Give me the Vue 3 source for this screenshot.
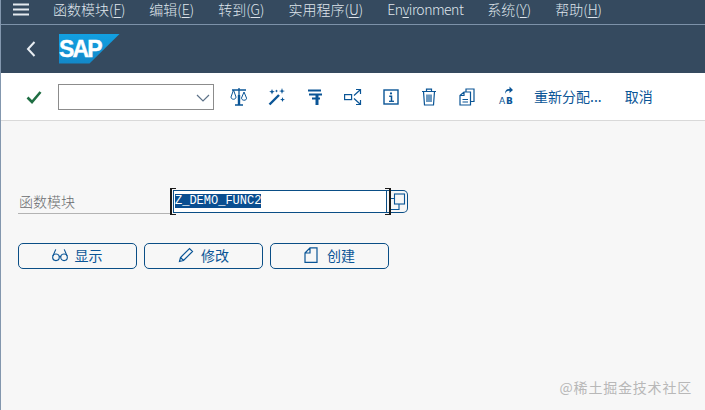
<template>
  <div class="window">
    <nav class="menubar">
      <svg class="burger" width="16" height="13" viewBox="0 0 16 13"><path d="M0 1.500h16M0 6.500h16M0 11.500h16" stroke="#e4e9ef" stroke-width="2" /></svg>
      <span v-for="m in menus" :key="m.label" class="menu">{{ m.label }}(<u>{{ m.key }}</u>)</span>
      <span class="menu env">En<u>v</u>ironment</span>
      <span v-for="m in menus2" :key="m.label" class="menu">{{ m.label }}(<u>{{ m.key }}</u>)</span>
    </nav>

    <header class="titlebar">
      <svg class="back" width="10" height="16" viewBox="0 0 10 16"><path d="M8.500 1 2 8l6.500 7" fill="none" stroke="#e8edf2" stroke-width="2" /></svg>
      <div class="logo"><span>SAP</span></div>
    </header>

    <div class="toolbar">
      <svg class="check" width="16" height="14" viewBox="0 0 16 14"><path d="M1.500 7.500 6 12 14.500 2" fill="none" stroke="#1f6e43" stroke-width="2.600" /></svg>
      <div class="combo">
        <svg width="14" height="8" viewBox="0 0 14 8"><path d="M1 1l6 6 6-6" fill="none" stroke="#5d7288" stroke-width="1.200" /></svg>
      </div>
      <div class="tools">
        <span class="tool">
          <svg width="18" height="20" viewBox="0 0 18 20" fill="none" stroke="#0a5596" stroke-width="1.300">
            <path d="M2 3h14M9 1v15M5 18h8" />
            <path d="M3.500 3 1 10c0 3 5 3 5 0L3.500 3M14 5l-2.500 6c0 3 5.500 3 5 0L14 5" stroke-width="1" />
            <path d="M9 8v10" stroke-width="2.400" />
          </svg>
        </span>
        <span class="tool">
          <svg width="18" height="18" viewBox="0 0 18 18" fill="#0a5596">
            <path d="M1.500 16.500 11 7" stroke="#0a5596" stroke-width="2.400" />
            <path d="m4 1 .8 2 2 .6-2 .8L4 6.500l-.8-2.100-2-.8 2-.6zM14 0l.8 2.400 2.200.6-2.200.8L14 6l-.8-2.200-2.200-.8 2.200-.6zM14.500 9l.7 1.900 1.800.6-1.800.7-.7 1.800-.7-1.800-1.800-.7 1.800-.6zM8.500 1.500l.5 1 1 .5-1 .5-.5 1-.5-1-1-.5 1-.5z" />
          </svg>
        </span>
        <span class="tool">
          <svg width="16" height="18" viewBox="0 0 16 18" fill="none" stroke="#0a5596">
            <path d="M1 2.500h13M2 6.500h13M5 10.500h8" stroke-width="1.800" />
            <path d="M10 6v11" stroke-width="3" />
          </svg>
        </span>
        <span class="tool">
          <svg width="18" height="18" viewBox="0 0 18 18" fill="none" stroke="#0a5596" stroke-width="1.200">
            <rect x="0.600" y="6.600" width="7" height="5" />
            <path d="M10 7.500 16 2M12 1.500h4.500V6M10 10.500l6 5.500M12 16.500h4.500V12" />
          </svg>
        </span>
        <span class="tool">
          <svg width="16" height="16" viewBox="0 0 16 16" fill="none" stroke="#0a5596">
            <rect x="1" y="1" width="14" height="14" stroke-width="1.400" />
            <path d="M6.200 7.200h2.300v4.800" stroke-width="1.500" />
            <path d="M6 12.300h5" stroke-width="1.300" />
            <circle cx="8" cy="4.400" r="1.100" fill="#0a5596" stroke="none" />
          </svg>
        </span>
        <span class="tool">
          <svg width="16" height="18" viewBox="0 0 16 18" fill="none" stroke="#0a5596" stroke-width="1.200">
            <path d="M1 3.500h14M5.500 3.500V1.200h5v2.300M2.500 3.500l1 13.500h9l1-13.500M6 6.500v7.500M8 6.500v7.500M10 6.500v7.500" />
          </svg>
        </span>
        <span class="tool">
          <svg width="16" height="18" viewBox="0 0 16 18" fill="none" stroke="#0a5596" stroke-width="1.200">
            <path d="M1 7.500 5 4h6.500v13H1zM5 4v3.500H1M3.500 11.500h5.500M3.500 14h5.500" />
            <path d="M7 4V1h8v12.500h-3.500" />
          </svg>
        </span>
        <span class="tool ab">
          <svg width="12" height="8" viewBox="0 0 12 8" fill="#0a5596">
            <path d="M3 8c0-4 2-5.500 4.500-5V0.500L11 4 7.500 7V4.800C5.500 4.500 4 5.500 3 8z" />
          </svg>
          <span class="ab-a">A</span><span class="ab-b">B</span>
        </span>
      </div>
      <span class="txt first">重新分配...</span>
      <span class="txt">取消</span>
    </div>

    <main class="content">
      <div class="field">
        <label class="label">函数模块</label>
        <div class="input-wrap">
          <div class="input"><span class="sel">Z_DEMO_FUNC2</span></div>
          <i class="br br-l"></i><i class="br br-r"></i>
          <div class="help">
            <svg width="18" height="18" viewBox="0 0 18 18" fill="none" stroke="#0a5596" stroke-width="1.100">
              <rect x="6.500" y="1" width="10" height="10" />
              <path d="M6.500 5.500H2v11h9V11" />
            </svg>
          </div>
        </div>
      </div>

      <div class="buttons">
        <button class="btn">
          <svg class="glasses" width="16" height="14" viewBox="0 0 17 14" fill="none" stroke="#0a5596" stroke-width="1.200">
            <circle cx="4.200" cy="9.500" r="3.500" /><circle cx="12.800" cy="9.500" r="3.500" />
            <path d="M7.700 9c.8-.7 1-.7 1.600 0M1 8l3-7M16 8 13 1" />
          </svg>
          显示
        </button>
        <button class="btn">
          <svg width="16" height="16" viewBox="0 0 16 16" fill="none" stroke="#0a5596" stroke-width="1.200">
            <path d="M1.500 14.500l1-4L11.500 1.500l3 3-9 9zM2.500 10.500l3 3" />
          </svg>
          修改
        </button>
        <button class="btn new">
          <svg width="14" height="16" viewBox="0 0 14 16" fill="none" stroke="#0a5596" stroke-width="1.200">
            <path d="M1 6 6 .8h7v14.600H1zM6 .8V6H1" />
          </svg>
          创建
        </button>
      </div>
    </main>

    <div class="watermark">@稀土掘金技术社区</div>
  </div>
</template>

<script setup>
const menus = [
  { label: '函数模块', key: 'F' },
  { label: '编辑', key: 'E' },
  { label: '转到', key: 'G' },
  { label: '实用程序', key: 'U' },
]
const menus2 = [
  { label: '系统', key: 'Y' },
  { label: '帮助', key: 'H' },
]
</script>

<style>
html, body { margin: 0; background: #f7f7f7; }
</style>

<style scoped>
.window {
  position: relative;
  width: 705px;
  height: 410px;
  overflow: hidden;
  box-sizing: border-box;
  border-left: 1px solid #8397ae;
  display: flex;
  flex-direction: column;
  background: #f7f7f7;
  font-family: "Noto Sans CJK SC", "Noto Sans", sans-serif;
  font-size: 14px;
}
.menubar {
  height: 24px;
  flex: none;
  box-sizing: border-box;
  display: flex;
  align-items: center;
  gap: 24px;
  padding: 0 0 6px 12px;
  background: #354a5f;
  color: #dfe5ec;
  font-weight: 300;
}
.menu { white-space: nowrap; line-height: 20px; }
.menu u { text-underline-offset: 2px; }
.env { letter-spacing: -.5px; }
.titlebar {
  height: 49px;
  flex: none;
  box-sizing: border-box;
  display: flex;
  align-items: center;
  padding-left: 25px;
  background: #354a5f;
  border-top: 1px solid #7d92a9;
}
.logo {
  margin-left: 23px;
  margin-top: -1px;
  width: 61px;
  height: 30px;
  background: linear-gradient(180deg, #12a0e2, #1388c8);
  clip-path: polygon(0 0, 100% 0, 50% 100%, 0 100%);
  color: #fff;
  font-family: "Liberation Sans", sans-serif;
  font-weight: 700;
  font-size: 23px;
  line-height: 30px;
  letter-spacing: -1.800px;
  -webkit-text-stroke: .4px #fff;
  box-sizing: border-box;
}
.toolbar {
  height: 48px;
  flex: none;
  box-sizing: border-box;
  display: flex;
  align-items: center;
  padding-left: 25px;
  background: #fff;
  border-bottom: 1px solid #d9d9d9;
}
.combo {
  width: 156px;
  height: 26px;
  margin-left: 16px;
  box-sizing: border-box;
  border: 1px solid #8c8c8c;
  display: flex;
  align-items: center;
  justify-content: flex-end;
  padding: 2px 3px 0 0;
}
.tools { display: flex; margin-left: 6px; }
.tool {
  position: relative;
  width: 38px;
  height: 24px;
  display: flex;
  align-items: center;
  justify-content: center;
}
.ab { color: #0a5596; font-family: "DejaVu Sans", sans-serif; font-size: 9px; }
.ab svg { position: relative; left: 3px; top: -7px; }
.ab-a, .ab-b { position: absolute; top: 11px; line-height: 10px; }
.ab-a { left: 13px; }
.ab-b { left: 20px; font-weight: 700; }
.txt { color: #0a5596; white-space: nowrap; margin-left: 23px; padding-bottom: 2px; }
.txt.first { margin-left: 10px; }
.content { flex: 1; padding: 68px 0 0 17px; }
.field { display: flex; align-items: flex-end; height: 26px; }
.label {
  width: 152px;
  box-sizing: border-box;
  height: 24px;
  line-height: 22px;
  padding-left: 1px;
  margin-bottom: 1px;
  color: #6a6d70;
  font-weight: 300;
  border-bottom: 1px solid #b3b3b3;
}
.input-wrap {
  position: relative;
  display: flex;
  margin-left: 3px;
  margin-bottom: 2px;
}
.input {
  width: 214px;
  height: 23px;
  box-sizing: border-box;
  border: 1px solid #0a4e86;
  background: #fff;
  padding-left: 1px;
  font-family: "Liberation Mono", monospace;
  font-size: 12px;
  line-height: 20px;
}
.sel { background: #0a4e90; color: #fff; }
.br {
  position: absolute;
  top: -2px;
  width: 4px;
  height: 25px;
  border: 1px solid #1a1a1a;
}
.br-l { left: -3px; border-right: 0; border-left-width: 2px; }
.br-r { left: 212px; border-left: 0; border-right-width: 2px; }
.help {
  width: 21px;
  height: 23px;
  box-sizing: border-box;
  border: 1px solid #0a4e86;
  border-left: 0;
  border-radius: 0 5px 5px 0;
  display: flex;
  align-items: center;
  justify-content: center;
}
.buttons { display: flex; gap: 7px; margin-top: 28px; }
.btn {
  width: 119px;
  height: 26px;
  padding: 0 0 2px;
  background: transparent;
  border: 1px solid #0a4e86;
  border-radius: 5px;
  color: #0a5596;
  font: inherit;
  display: flex;
  align-items: center;
  justify-content: center;
  gap: 7px;
}
.btn { color: #0a5596; }
.btn.new { gap: 9px; }
.glasses { margin-left: -1px; }
.watermark {
  position: absolute;
  right: 13px;
  bottom: 13px;
  color: #b8b8b8;
  font-size: 14px;
  letter-spacing: .8px;
  line-height: 20px;
}
</style>
